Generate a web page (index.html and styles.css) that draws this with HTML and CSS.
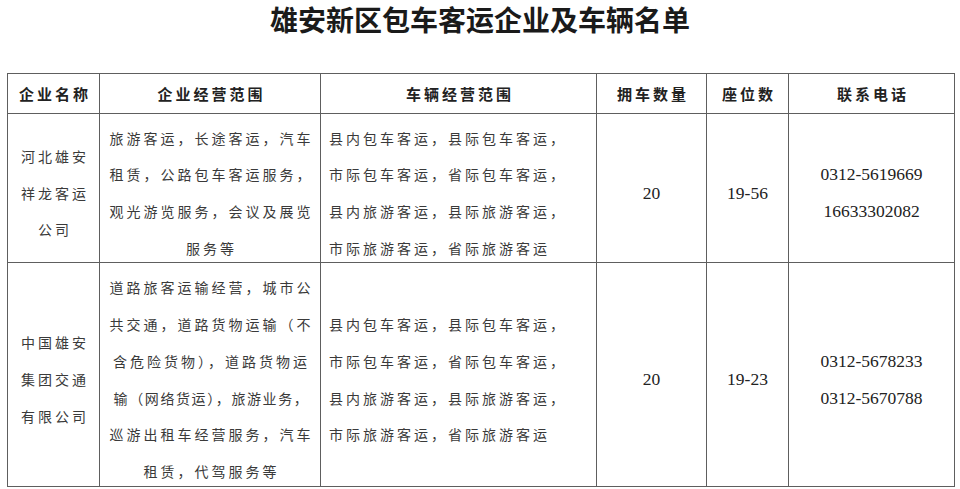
FILE: index.html
```html
<!DOCTYPE html>
<html lang="zh-CN">
<head>
<meta charset="utf-8">
<title>雄安新区包车客运企业及车辆名单</title>
<link rel="stylesheet" href="styles.css">
</head>
<body>
<h1 class="title">雄安新区包车客运企业及车辆名单</h1>
<table class="list">
  <colgroup>
    <col class="c-name">
    <col class="c-scope">
    <col class="c-vehicle">
    <col class="c-count">
    <col class="c-seat">
    <col class="c-phone">
  </colgroup>
  <thead>
    <tr class="head-row">
      <th>企业名称</th>
      <th>企业经营范围</th>
      <th>车辆经营范围</th>
      <th>拥车数量</th>
      <th>座位数</th>
      <th>联系电话</th>
    </tr>
  </thead>
  <tbody>
    <tr class="row-1">
      <td class="cjk center">
        <div class="lines">
          <div class="ln">河北雄安</div>
          <div class="ln">祥龙客运</div>
          <div class="ln">公司</div>
        </div>
      </td>
      <td class="cjk center">
        <div class="lines">
          <div class="ln">旅游客运，长途客运，汽车</div>
          <div class="ln">租赁，公路包车客运服务，</div>
          <div class="ln">观光游览服务，会议及展览</div>
          <div class="ln">服务等</div>
        </div>
      </td>
      <td class="cjk left">
        <div class="lines">
          <div class="ln">县内包车客运，县际包车客运，</div>
          <div class="ln">市际包车客运，省际包车客运，</div>
          <div class="ln">县内旅游客运，县际旅游客运，</div>
          <div class="ln">市际旅游客运，省际旅游客运</div>
        </div>
      </td>
      <td class="num"><div class="lines"><div class="ln">20</div></div></td>
      <td class="num"><div class="lines"><div class="ln">19-56</div></div></td>
      <td class="num">
        <div class="lines">
          <div class="ln">0312-5619669</div>
          <div class="ln">16633302082</div>
        </div>
      </td>
    </tr>
    <tr class="row-2">
      <td class="cjk center">
        <div class="lines">
          <div class="ln">中国雄安</div>
          <div class="ln">集团交通</div>
          <div class="ln">有限公司</div>
        </div>
      </td>
      <td class="cjk center">
        <div class="lines">
          <div class="ln">道路旅客运输经营，城市公</div>
          <div class="ln">共交通，道路货物运输（不</div>
          <div class="ln">含危险货物），道路货物运</div>
          <div class="ln tight">输（网络货运），旅游业务，</div>
          <div class="ln">巡游出租车经营服务，汽车</div>
          <div class="ln">租赁，代驾服务等</div>
        </div>
      </td>
      <td class="cjk left">
        <div class="lines">
          <div class="ln">县内包车客运，县际包车客运，</div>
          <div class="ln">市际包车客运，省际包车客运，</div>
          <div class="ln">县内旅游客运，县际旅游客运，</div>
          <div class="ln">市际旅游客运，省际旅游客运</div>
        </div>
      </td>
      <td class="num"><div class="lines"><div class="ln">20</div></div></td>
      <td class="num"><div class="lines"><div class="ln">19-23</div></div></td>
      <td class="num">
        <div class="lines">
          <div class="ln">0312-5678233</div>
          <div class="ln">0312-5670788</div>
        </div>
      </td>
    </tr>
  </tbody>
</table>
</body>
</html>
```

FILE: styles.css
```css
html, body {
  margin: 0;
  padding: 0;
  background: #ffffff;
}

body {
  font-family: "Noto Sans CJK SC", "Noto Sans", sans-serif;
  color: #333333;
}

.title {
  margin: 0;
  height: 73px;
  box-sizing: border-box;
  padding-top: 4px;
  font-size: 28px;
  line-height: 30px;
  font-weight: 700;
  text-align: center;
  color: #1a1a1a;
}

.list {
  margin-left: 7px;
  width: 947px;
  table-layout: fixed;
  border-collapse: collapse;
}

.c-name { width: 92px; }
.c-scope { width: 221px; }
.c-vehicle { width: 276px; }
.c-count { width: 110px; }
.c-seat { width: 82px; }
.c-phone { width: 166px; }

.list th,
.list td {
  border: 1px solid #5e5e5e;
  padding: 0;
  vertical-align: middle;
  white-space: nowrap;
}

.head-row {
  height: 40px;
}

.list th {
  font-size: 15px;
  font-weight: 700;
  letter-spacing: 3px;
  padding-left: 3px;
  color: #222222;
  text-align: center;
  line-height: 20px;
}

.row-1 { height: 149px; }
.row-2 { height: 224px; }

.lines {
  margin-top: 5px;
  margin-bottom: -5px;
}

.ln {
  line-height: 36.7px;
}

.list td.cjk {
  font-size: 14px;
  letter-spacing: 3px;
  color: #3a3a3a;
}

.list td.center {
  text-align: center;
  padding-left: 3px;
}

.list td.left {
  text-align: left;
  padding-left: 8px;
}

.list .tight {
  letter-spacing: 1.6px;
}

.list td.num {
  font-family: "Liberation Serif", "Times New Roman", serif;
  font-size: 17.5px;
  text-align: center;
  color: #222222;
}
```
